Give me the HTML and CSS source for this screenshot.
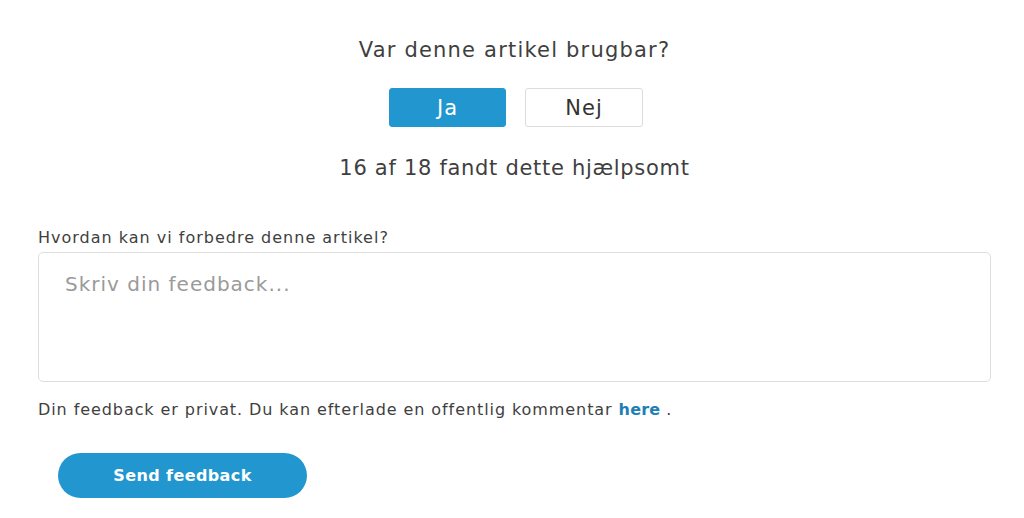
FILE: index.html
```html
<!DOCTYPE html>
<html lang="da">
<head>
<meta charset="utf-8">
<title>Feedback</title>
<link rel="stylesheet" href="styles.css">
</head>
<body>
<div class="page">
  <section class="vote">
    <h2 class="vote-title">Var denne artikel brugbar?</h2>
    <div class="vote-buttons">
      <button class="btn-vote btn-yes">Ja</button>
      <button class="btn-vote btn-no">Nej</button>
    </div>
    <p class="vote-count">16 af 18 fandt dette hjælpsomt</p>
  </section>
  <form class="feedback">
    <label class="feedback-label" for="fb">Hvordan kan vi forbedre denne artikel?</label>
    <textarea id="fb" class="feedback-input" placeholder="Skriv din feedback..."></textarea>
    <p class="feedback-note">Din feedback er privat. Du kan efterlade en offentlig kommentar <a href="#" class="link">here</a> .</p>
    <button type="button" class="btn-send">Send feedback</button>
  </form>
</div>
</body>
</html>
```
FILE: styles.css
```css
* { box-sizing: border-box; }
body {
  margin: 0;
  background: #fff;
  font-family: "DejaVu Sans", sans-serif;
  color: #3f3f3f;
}
.page {
  width: 1024px;
  padding: 0 33px 0 38px;
}
.vote {
  display: flex;
  flex-direction: column;
  align-items: center;
  padding-top: 36px;
}
.vote-title {
  margin: 0;
  font-size: 21px;
  font-weight: normal;
  line-height: 28px;
  letter-spacing: 1.2px;
}
.vote-buttons {
  display: flex;
  gap: 19px;
  margin-top: 24px;
  padding-left: 3px;
}
.btn-vote {
  width: 118px;
  height: 39px;
  border-radius: 3px;
  font-family: inherit;
  font-size: 21px;
  letter-spacing: 1px;
  cursor: pointer;
}
.btn-yes {
  width: 117px;
  background: #2196cf;
  border: 1px solid #2196cf;
  color: #fff;
}
.btn-no {
  background: #fff;
  border: 1px solid #dcdcdc;
  color: #333;
}
.vote-count {
  margin: 27px 0 0;
  font-size: 21px;
  line-height: 28px;
  letter-spacing: 0.7px;
}
.feedback {
  display: flex;
  flex-direction: column;
  align-items: flex-start;
  margin-top: 46px;
}
.feedback-label {
  font-size: 16px;
  line-height: 20px;
  letter-spacing: 1px;
}
.feedback-input {
  margin-top: 4px;
  width: 100%;
  height: 130px;
  border: 1px solid #dedede;
  border-radius: 5px;
  padding: 19px 26px;
  resize: none;
  font-family: inherit;
  font-size: 20px;
  letter-spacing: 1px;
  color: #333;
}
.feedback-input::placeholder { color: #9a9a9a; }
.feedback-note {
  margin: 18px 0 0;
  font-size: 16px;
  line-height: 20px;
  letter-spacing: 0.92px;
}
.link {
  color: #1f7fb4;
  font-weight: bold;
  text-decoration: none;
  letter-spacing: 0.2px;
}
.btn-send {
  margin: 33px 0 0 20px;
  width: 249px;
  height: 45px;
  border: none;
  border-radius: 23px;
  background: #2196cf;
  color: #fff;
  font-family: inherit;
  font-weight: bold;
  font-size: 16px;
  letter-spacing: 0.4px;
  cursor: pointer;
}
```
